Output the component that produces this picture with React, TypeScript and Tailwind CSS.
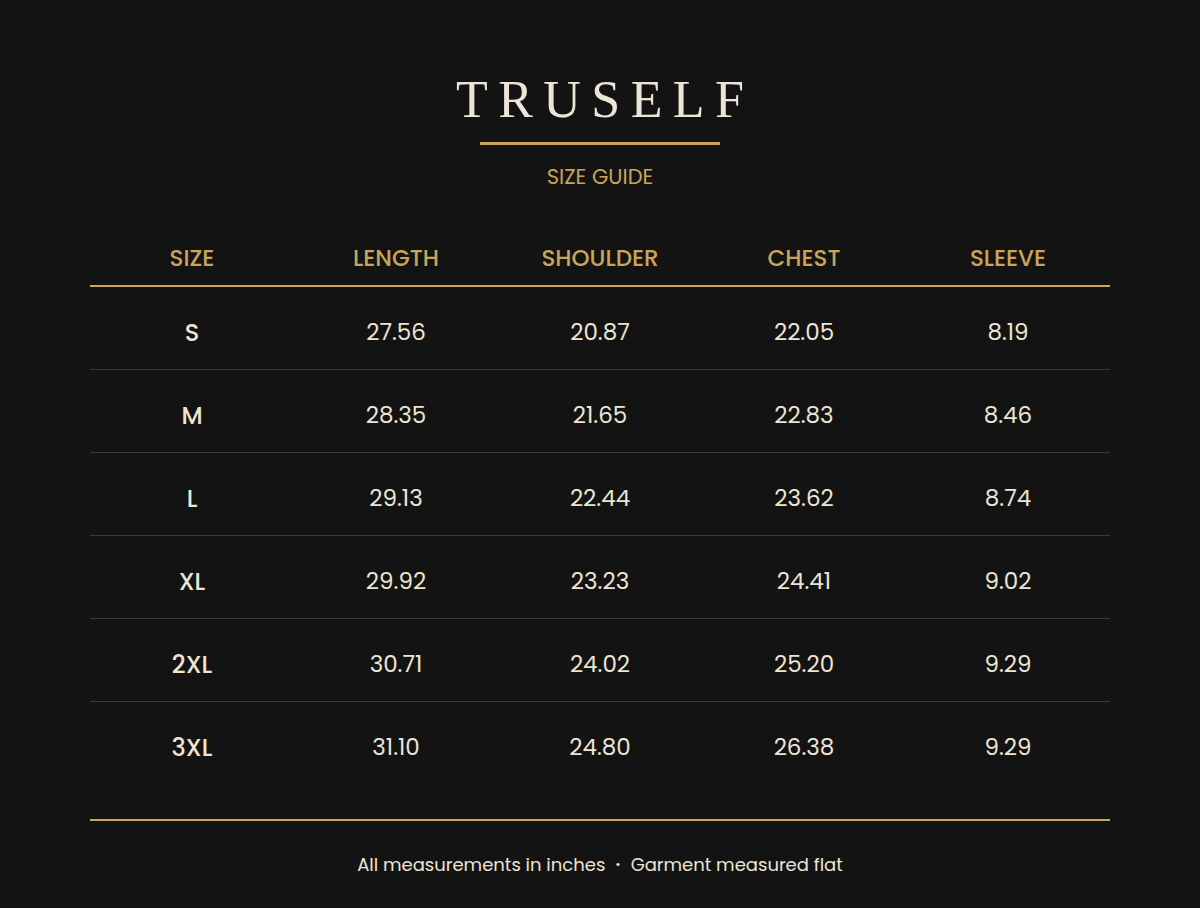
import React from "react";

const rows = [
  ["S", "27.56", "20.87", "22.05", "8.19"],
  ["M", "28.35", "21.65", "22.83", "8.46"],
  ["L", "29.13", "22.44", "23.62", "8.74"],
  ["XL", "29.92", "23.23", "24.41", "9.02"],
  ["2XL", "30.71", "24.02", "25.20", "9.29"],
  ["3XL", "31.10", "24.80", "26.38", "9.29"],
];
const heads = ["SIZE", "LENGTH", "SHOULDER", "CHEST", "SLEEVE"];

export default function App() {
  return (
    <div className="w-[1200px] h-[908px] bg-[#131313] flex flex-col items-center" style={{ fontFamily: "Poppins, 'Open Sans', sans-serif" }}>
      <h1 className="mt-[72px] h-[56px] leading-[56px] text-[52px] tracking-[0.2em] pl-[0.2em] text-[#ece5d6]" style={{ fontFamily: "'Liberation Serif', serif" }}>
        TRUSELF
      </h1>
      <div className="mt-[14px] w-[240px] h-[3px] bg-[#c9a45c]" />
      <div className="mt-[19px] text-[21px] leading-[26px] text-[#c9a45c]">SIZE GUIDE</div>
      <div className="mt-[41px] w-[1020px]">
        <div className="grid grid-cols-5 h-[56px] items-center border-b-2 border-[#c9a45c]">
          {heads.map((h) => (
            <div key={h} className="text-center text-[23px] font-medium text-[#c9a45c]">{h}</div>
          ))}
        </div>
        {rows.map((r, i) => (
          <div key={r[0]} className={`grid grid-cols-5 h-[83px] items-center ${i < rows.length - 1 ? "border-b border-[#3a3a3a]" : ""}`}>
            {r.map((c, j) => (
              <div key={j} className={`text-center text-[#ece5d6] ${j === 0 ? "text-[24px] font-medium pt-[9px]" : "text-[23px] font-normal pt-[8px]"}`}>{c}</div>
            ))}
          </div>
        ))}
        <div className="mt-[34px] h-[2px] bg-[#c9a45c]" />
      </div>
      <div className="mt-[30px] text-[18px] text-[#ece5d6] flex items-center gap-[10px]">
        <span>All measurements in inches</span>
        <span className="text-[13px]">•</span>
        <span>Garment measured flat</span>
      </div>
    </div>
  );
}
